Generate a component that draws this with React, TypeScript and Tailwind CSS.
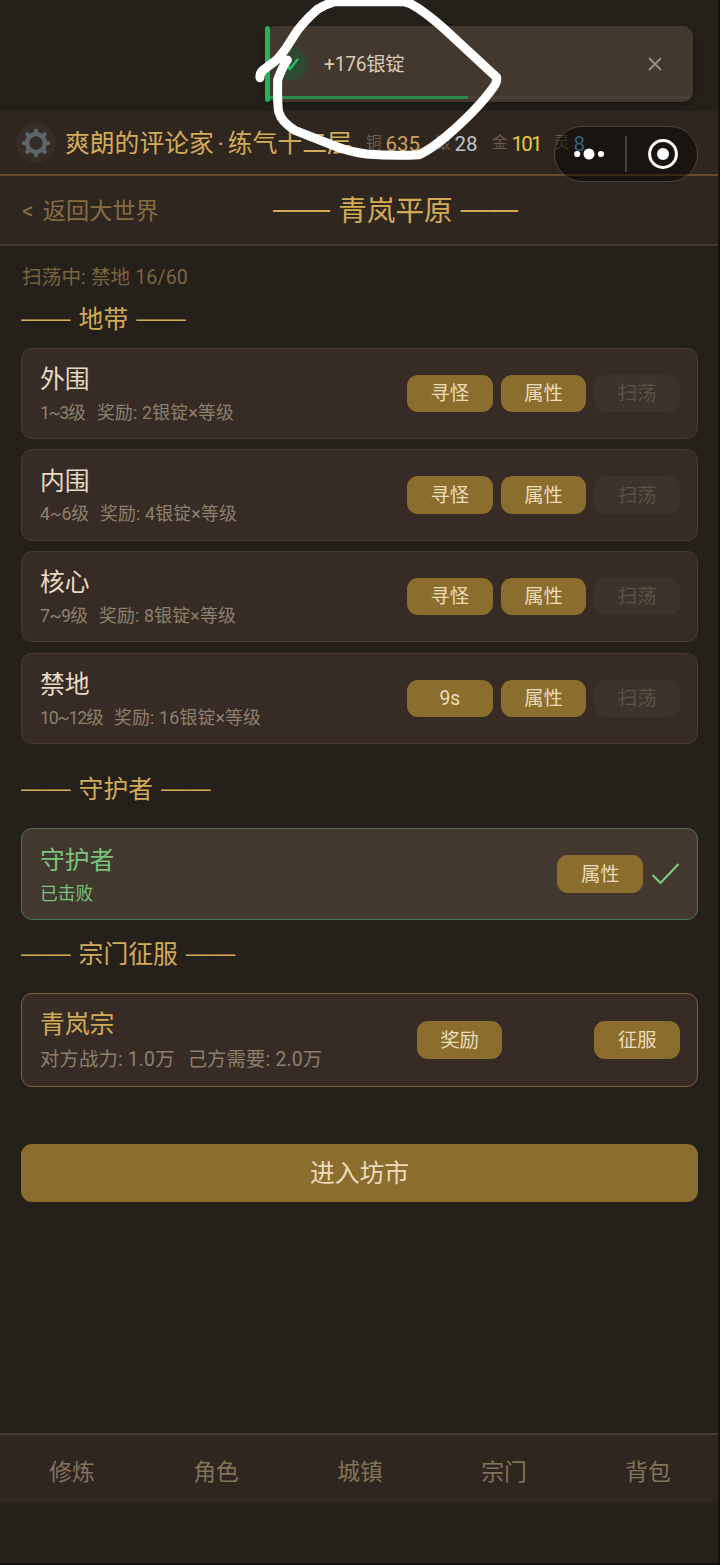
import React from "react";

type Zone = {
  id: number;
  name: string;
  level: string;
  levelStyle: string;
  reward: string;
  action: string;
};

const zones: Zone[] = [
  { id: 1, name: "外围", level: "1~3级", levelStyle: "w-[57px] tracking-[-1.4px]", reward: "奖励: 2银锭×等级", action: "寻怪" },
  { id: 2, name: "内围", level: "4~6级", levelStyle: "w-[60px] tracking-[-0.3px]", reward: "奖励: 4银锭×等级", action: "寻怪" },
  { id: 3, name: "核心", level: "7~9级", levelStyle: "w-[59px] tracking-[-0.6px]", reward: "奖励: 8银锭×等级", action: "寻怪" },
  { id: 4, name: "禁地", level: "10~12级", levelStyle: "w-[74px] tracking-[-1.2px]", reward: "奖励: 16银锭×等级", action: "9s" },
];

const coins = [
  { label: "铜", value: "635", color: "text-[#c9a25a]", width: "w-[69px]" },
  { label: "银", value: "28", color: "text-[#bfc3c9]", width: "w-[57px]" },
  { label: "金", value: "101", color: "text-[#e8cb38] tracking-[-1.8px]", width: "w-[62px]" },
  { label: "灵", value: "8", color: "text-[#55b0d6]", width: "w-[34px]" },
];

const tabs = ["修炼", "角色", "城镇", "宗门", "背包"];

const Dash = () => <span className="-translate-y-[2px] [font-family:'Liberation_Sans',sans-serif]">——</span>;

const SectionTitle = ({ children }: { children: string }) => (
  <h2 className="flex h-[30px] items-center gap-2 text-[24.8px] text-[#d2ab57]">
    <Dash />
    <span>{children}</span>
    <Dash />
  </h2>
);

const ActionButton = ({ children, disabled }: { children: string; disabled?: boolean }) => (
  <button
    disabled={disabled}
    className={`flex h-[37.5px] w-[85.7px] items-center justify-center rounded-[11px] pt-px text-[19.3px] ${
      disabled ? "bg-[#3d332b] text-[#5b5147]" : "bg-[#8b6e2d] text-[#ecdcbd]"
    }`}
  >
    {children}
  </button>
);

const GearIcon = () => (
  <svg width="30" height="30" viewBox="-15 -15 30 30" fill="none" stroke="#5d666b">
    <circle r="8.9" strokeWidth="4.4" />
    {[0, 45, 90, 135, 180, 225, 270, 315].map((deg) => (
      <path key={deg} d="M0 -10V-12.4" strokeWidth="4" strokeLinecap="round" transform={`rotate(${deg})`} />
    ))}
  </svg>
);

//NOTE - 顶部提示
const Toast = () => (
  <div className="absolute left-[265px] top-[26px] flex h-[76px] w-[428px] items-center rounded-[10px] bg-[#43382e] shadow-[0_3px_8px_rgba(0,0,0,0.35)]">
    <div className="h-full w-[5px] rounded-full bg-[#22b455]" />
    <div className="ml-[6px] flex size-8 items-center justify-center rounded-full bg-[#2f4a32]">
      <svg width="18" height="16" viewBox="0 0 18 16" fill="none" stroke="#22c55e" strokeWidth="2.2" strokeLinecap="round">
        <path d="M3 8.5L7 13L14.5 3.5" />
      </svg>
    </div>
    <p className="ml-4 flex-1 pt-[2px] text-[19.3px] tracking-[-0.3px] text-[#d8cdb9]">+176银锭</p>
    <svg className="mr-[31px]" width="14" height="14" viewBox="0 0 14 14" stroke="#9b907d" strokeWidth="1.9">
      <path d="M1 1L13 13M13 1L1 13" />
    </svg>
    <div className="absolute bottom-[3px] left-[5px] h-[3px] w-[420px] bg-[#4a4038]">
      <div className="h-full w-[198px] bg-[#2a8d48]" />
    </div>
  </div>
);

const Capsule = () => (
  <div className="absolute left-[554px] top-[126px] flex h-[56px] w-[144px] items-center rounded-full border-[1.5px] border-[#4b4540] bg-black/45">
    <svg className="ml-[19px]" width="30" height="12" viewBox="0 0 30 12" fill="#fff">
      <circle cx="3.2" cy="6" r="3.1" />
      <circle cx="15" cy="6" r="5.5" />
      <circle cx="27" cy="6" r="3.1" />
    </svg>
    <div className="ml-[21px] h-9 w-[1.5px] bg-[#47413c]" />
    <svg className="ml-[20px]" width="32" height="32" viewBox="0 0 32 32">
      <circle cx="16" cy="16" r="13.4" fill="none" stroke="#fff" strokeWidth="3" />
      <circle cx="16" cy="16" r="6" fill="#fff" />
    </svg>
  </div>
);

const Scribble = () => (
  <svg className="pointer-events-none absolute left-[240px] top-0" width="280" height="180" viewBox="0 0 840 540">
    <path
      d="M60 233Q58 216 76 205L112 178Q140 145 160 110T232 28Q258 12 285 5H490Q510 8 530 22C560 42 585 62 612 86L770 232Q772 246 760 262C720 318 670 365 620 408Q575 446 538 464Q460 468 380 462Q330 455 290 440L165 391Q124 366 116 335Q112 315 113 240Q125 205 142 180"
      fill="none"
      stroke="#fff"
      strokeWidth="27"
      strokeLinecap="round"
      strokeLinejoin="round"
    />
  </svg>
);

const App = () => {
  return (
    <div className="relative flex h-[1565px] w-[720px] flex-col overflow-hidden border-r-2 border-b-2 border-r-[#15110e] border-b-[#15110e] bg-[#26201b] font-[Roboto,'Noto_Sans_CJK_SC',sans-serif] leading-none">
      <header className="mt-[111px] flex h-[65px] shrink-0 items-center border-b-2 border-[#644d2a] bg-[#302620] pl-4">
        <div className="flex size-10 items-center justify-center rounded-full bg-[#362d28]">
          <GearIcon />
        </div>
        <div className="ml-[9px] flex w-[301px] pt-[3px] text-[24.8px] text-[#d2ab57]">
          <span>爽朗的评论家</span>
          <span className="w-[14px] text-center">·</span>
          <span>练气十二层</span>
        </div>
        <div className="flex pt-[3px]">
          {coins.map((coin) => (
            <div key={coin.label} className={`flex items-center gap-1 ${coin.width}`}>
              <span className="text-[15.5px] text-[#6b5f50]">{coin.label}</span>
              <span className={`text-[20.5px] ${coin.color}`}>{coin.value}</span>
            </div>
          ))}
        </div>
      </header>

      <div className="flex h-[70px] shrink-0 items-center border-b-2 border-[#42372d] bg-[#302620] pl-[22px] pt-[3px]">
        <button className="flex w-[251px] gap-[9px] text-[23.2px] text-[#856c41]">
          <span>&lt;</span>
          <span>返回大世界</span>
        </button>
        <h1 className="flex items-center gap-2 text-[28.6px] text-[#d2ab57]">
          <Dash />
          <span>青岚平原</span>
          <Dash />
        </h1>
      </div>

      <main className="flex flex-1 flex-col pl-[21px] pr-[20px]">
        <p className="mt-[20px] h-6 pl-px text-[19.6px] leading-6 tracking-[0.1px] text-[#7b653f]">扫荡中: 禁地 16/60</p>
        <div className="mt-[15px]">
          <SectionTitle>地带</SectionTitle>
        </div>

        <div className="mt-[12.5px] flex flex-col gap-[10.2px]">
          {zones.map((zone) => (
            <div
              key={zone.id}
              className="flex h-[91.5px] items-center justify-between rounded-[11px] border-[1.5px] border-[#4a3c2c] bg-[#362c25] pl-[18px] pr-[17px]"
            >
              <div className="pt-[3px]">
                <p className="text-[24.8px] text-[#e6dac4]">{zone.name}</p>
                <p className="mt-[11px] flex text-[17.8px] text-[#8d806c]">
                  <span className={zone.levelStyle}>{zone.level}</span>
                  <span className="tracking-[0.2px]">{zone.reward}</span>
                </p>
              </div>
              <div className="flex gap-2">
                <ActionButton>{zone.action}</ActionButton>
                <ActionButton>属性</ActionButton>
                <ActionButton disabled>扫荡</ActionButton>
              </div>
            </div>
          ))}
        </div>

        <div className="mt-[31px]">
          <SectionTitle>守护者</SectionTitle>
        </div>
        <div className="mt-[23px] flex h-[92px] items-center justify-between rounded-[11px] border-[1.5px] border-[#4a7350] bg-[#43382d] pl-[18px] pr-[17px]">
          <div className="pt-[3px]">
            <p className="text-[24.8px] text-[#78c47c]">守护者</p>
            <p className="mt-[11px] text-[17.8px] text-[#78c47c]">已击败</p>
          </div>
          <div className="flex items-center gap-2">
            <ActionButton>属性</ActionButton>
            <svg width="29" height="24" viewBox="0 0 29 24" fill="none" stroke="#7dcb82" strokeWidth="2.2">
              <path d="M1.5 13L9.5 21L27.5 2" />
            </svg>
          </div>
        </div>

        <div className="mt-[20px]">
          <SectionTitle>宗门征服</SectionTitle>
        </div>
        <div className="mt-[23px] flex h-[94px] items-center justify-between rounded-[11px] border-[1.5px] border-[#7c6236] bg-[#362c25] pl-[18px] pr-[17px]">
          <div className="pt-[2px]">
            <p className="text-[24.8px] text-[#d2ab57]">青岚宗</p>
            <p className="mt-[12px] flex gap-[13px] text-[19.3px] tracking-[0.2px] text-[#8d806c]">
              <span>对方战力: 1.0万</span>
              <span>己方需要: 2.0万</span>
            </p>
          </div>
          <div className="flex gap-[92px]">
            <ActionButton>奖励</ActionButton>
            <ActionButton>征服</ActionButton>
          </div>
        </div>

        <button className="mt-[57px] h-[58px] rounded-[11px] bg-[#8b6e2d] pt-[2px] text-[24.8px] text-[#ecdcbd]">进入坊市</button>
      </main>

      <nav className="mb-[60px] flex h-[70px] w-[720px] shrink-0 items-center border-t-2 border-[#483b31] bg-[#302620] pt-[9px]">
        {tabs.map((tab) => (
          <button key={tab} className="flex-1 text-[22.8px] text-[#827359]">
            {tab}
          </button>
        ))}
      </nav>

      <Toast />
      <Capsule />
      <Scribble />
    </div>
  );
};

export default App;
